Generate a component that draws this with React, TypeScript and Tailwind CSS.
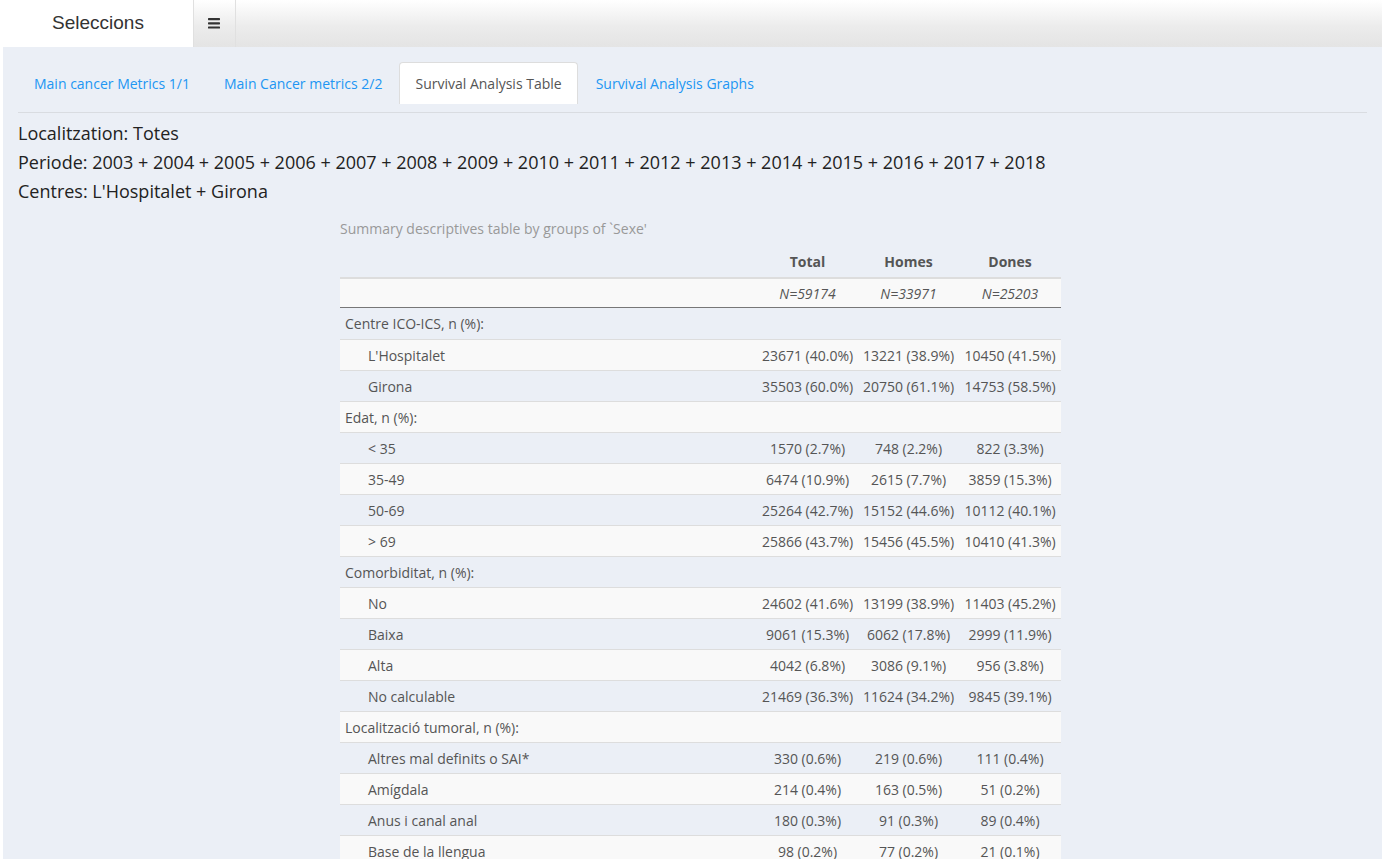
import React from "react";

type Row = { label: string; sub?: boolean; v?: [string, string, string] };

const rows: Row[] = [
  { label: "Centre ICO-ICS, n (%):" },
  { label: "L'Hospitalet", sub: true, v: ["23671 (40.0%)", "13221 (38.9%)", "10450 (41.5%)"] },
  { label: "Girona", sub: true, v: ["35503 (60.0%)", "20750 (61.1%)", "14753 (58.5%)"] },
  { label: "Edat, n (%):" },
  { label: "< 35", sub: true, v: ["1570 (2.7%)", "748 (2.2%)", "822 (3.3%)"] },
  { label: "35-49", sub: true, v: ["6474 (10.9%)", "2615 (7.7%)", "3859 (15.3%)"] },
  { label: "50-69", sub: true, v: ["25264 (42.7%)", "15152 (44.6%)", "10112 (40.1%)"] },
  { label: "> 69", sub: true, v: ["25866 (43.7%)", "15456 (45.5%)", "10410 (41.3%)"] },
  { label: "Comorbiditat, n (%):" },
  { label: "No", sub: true, v: ["24602 (41.6%)", "13199 (38.9%)", "11403 (45.2%)"] },
  { label: "Baixa", sub: true, v: ["9061 (15.3%)", "6062 (17.8%)", "2999 (11.9%)"] },
  { label: "Alta", sub: true, v: ["4042 (6.8%)", "3086 (9.1%)", "956 (3.8%)"] },
  { label: "No calculable", sub: true, v: ["21469 (36.3%)", "11624 (34.2%)", "9845 (39.1%)"] },
  { label: "Localització tumoral, n (%):" },
  { label: "Altres mal definits o SAI*", sub: true, v: ["330 (0.6%)", "219 (0.6%)", "111 (0.4%)"] },
  { label: "Amígdala", sub: true, v: ["214 (0.4%)", "163 (0.5%)", "51 (0.2%)"] },
  { label: "Anus i canal anal", sub: true, v: ["180 (0.3%)", "91 (0.3%)", "89 (0.4%)"] },
  { label: "Base de la llengua", sub: true, v: ["98 (0.2%)", "77 (0.2%)", "21 (0.1%)"] },
];

const grid = "grid grid-cols-[417px_101px_101px_102px]";

export default function App() {
  return (
    <div className="w-[1382px] h-[859px] overflow-hidden bg-white font-['Open_Sans',sans-serif]">
      {/* Header */}
      <div className="flex h-[47px]">
        <div className="w-[193px] bg-white flex items-center justify-center pl-[3px] text-[19px] text-[#333] font-['Liberation_Sans',sans-serif]">
          Seleccions
        </div>
        <div className="w-[43px] flex items-center justify-center border-l border-r border-[#e0e0e0] bg-[linear-gradient(to_bottom,#ffffff_0%,#ececec_55%,#e4e4e4_100%)]">
          <svg width="13" height="12" viewBox="0 0 13 12" className="ml-[-1px] mt-[-2px]">
            <rect x="0" y="1" width="12" height="2.2" rx="0.6" fill="#333" />
            <rect x="0" y="5.2" width="12" height="2.2" rx="0.6" fill="#333" />
            <rect x="0" y="9.4" width="12" height="2.2" rx="0.6" fill="#333" />
          </svg>
        </div>
        <div className="flex-1 bg-[linear-gradient(to_bottom,#ffffff_0%,#ececec_55%,#e4e4e4_100%)]" />
      </div>

      {/* Content */}
      <div className="ml-[3px] h-[812px] bg-[#ebeff6] px-[15px] pt-[15px]">
        {/* Tabs */}
        <div className="flex items-start h-[51px] border-b border-[#d9dce1] text-[14px]">
          <div className="px-[16px] h-[42px] flex items-center text-[#2196f3]">Main cancer Metrics 1/1</div>
          <div className="ml-[1px] px-[17px] h-[42px] flex items-center text-[#2196f3]">Main Cancer metrics 2/2</div>
          <div className="px-[15px] h-[42px] flex items-center bg-white border border-[#dddddd] border-b-0 rounded-t-[4px] text-[#555]">
            Survival Analysis Table
          </div>
          <div className="px-[18px] h-[42px] flex items-center text-[#2196f3]">Survival Analysis Graphs</div>
        </div>

        {/* Info */}
        <div className="pt-[6px] text-[18px] leading-[29px] text-[#222]">
          <div>Localitzation: Totes</div>
          <div>Periode: 2003 + 2004 + 2005 + 2006 + 2007 + 2008 + 2009 + 2010 + 2011 + 2012 + 2013 + 2014 + 2015 + 2016 + 2017 + 2018</div>
          <div>Centres: L'Hospitalet + Girona</div>
        </div>

        {/* Table */}
        <div className="ml-[322px] w-[721px] mt-[8px] text-[14px] text-[#555]">
          <div className="h-[28px] flex items-center text-[#999]">Summary descriptives table by groups of `Sexe'</div>
          <div className={`${grid} h-[35px] items-end pb-[5px] font-bold`}>
            <div />
            <div className="text-center">Total</div>
            <div className="text-center">Homes</div>
            <div className="text-center">Dones</div>
          </div>
          <div className={`${grid} h-[31px] items-center bg-[#f9f9f9] border-t-2 border-[#dddddd] border-b border-b-[#777] italic`}>
            <div />
            <div className="text-center">N=59174</div>
            <div className="text-center">N=33971</div>
            <div className="text-center">N=25203</div>
          </div>
          {rows.map((r, i) => (
            <div
              key={i}
              className={`${grid} h-[31px] items-center ${i > 0 ? "border-t border-[#dddddd]" : ""} ${i % 2 === 1 ? "bg-[#f9f9f9]" : ""}`}
            >
              <div className={r.sub ? "pl-[28px]" : "pl-[5px]"}>{r.label}</div>
              {r.v ? (
                <>
                  <div className="text-center whitespace-nowrap">{r.v[0]}</div>
                  <div className="text-center whitespace-nowrap">{r.v[1]}</div>
                  <div className="text-center whitespace-nowrap">{r.v[2]}</div>
                </>
              ) : (
                <>
                  <div />
                  <div />
                  <div />
                </>
              )}
            </div>
          ))}
        </div>
      </div>
    </div>
  );
}
